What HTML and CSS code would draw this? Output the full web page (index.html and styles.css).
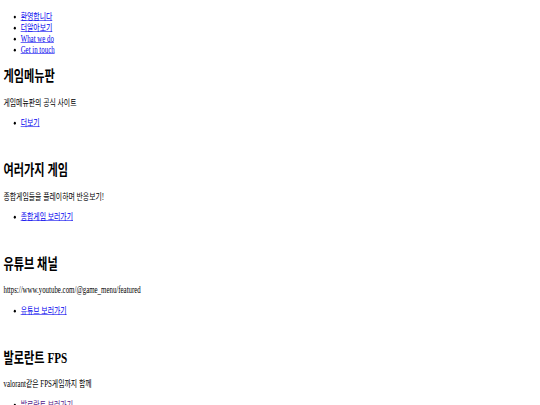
FILE: index.html
```html
<!DOCTYPE html>
<html lang="ko">
<head>
<meta charset="utf-8">
<title>게임메뉴판</title>
<link rel="stylesheet" href="styles.css">
</head>
<body>
<div class="page">
  <ul class="nav">
    <li><a href="#welcome">환영합니다</a></li>
    <li><a href="#more">더알아보기</a></li>
    <li><a href="#what">What we do</a></li>
    <li><a href="#touch">Get in touch</a></li>
  </ul>
  <section class="block">
    <h1>게임메뉴판</h1>
    <p>게임메뉴판의 공식 사이트</p>
    <ul><li><a href="#more">더보기</a></li></ul>
  </section>
  <section class="block">
    <h1>여러가지 게임</h1>
    <p>종합게임들을 플레이하며 반응보기!</p>
    <ul><li><a href="#games">종합게임 보러가기</a></li></ul>
  </section>
  <section class="block">
    <h1>유튜브 채널</h1>
    <p>https://www.youtube.com/@game_menu/featured</p>
    <ul><li><a href="#youtube">유튜브 보러가기</a></li></ul>
  </section>
  <section class="block">
    <h1>발로란트 FPS</h1>
    <p>valorant같은 FPS게임까지 함께</p>
    <ul><li><a class="visited" href="#valorant">발로란트 보러가기</a></li></ul>
  </section>
</div>
</body>
</html>
```

FILE: styles.css
```css
html {
  overflow: hidden;
}
body {
  margin: 0;
}
.page {
  width: 1256px;
  padding: 19px 8px 0;
  box-sizing: border-box;
  font-family: "Liberation Serif", "Noto Sans CJK KR", serif;
  font-size: 16px;
  line-height: 19px;
  color: #000;
  transform: scale(0.43, 0.58);
  transform-origin: 0 0;
}
ul {
  margin: 0;
  padding-left: 40px;
}
a {
  color: #0000ee;
}
a.visited {
  color: #551a8b;
}
.block {
  margin-top: 21px;
}
.block + .block {
  margin-top: 57px;
}
h1 {
  font-size: 26px;
  line-height: 32px;
  margin: 0 0 19px;
}
p {
  margin: 0 0 16px;
}
```
